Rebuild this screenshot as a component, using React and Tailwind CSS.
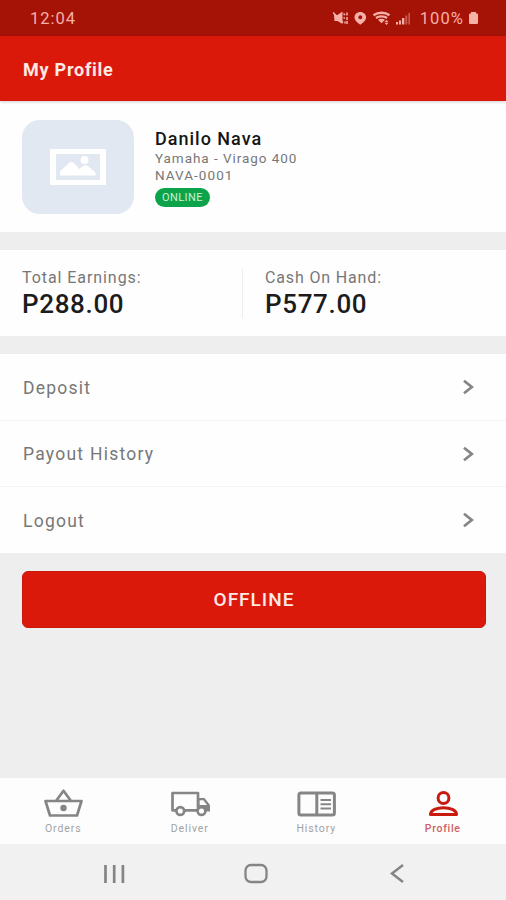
import React from "react";

function StatusIcons() {
  return (
    <svg width="81" height="16" viewBox="0 0 81 16" fill="#f5b0a7" className="block">
      {/* muted speaker */}
      <path d="M1 5h3.500L9.500 1.500v12.500L4.500 11H1.500z" />
      <path d="M0 2.500l10 10" stroke="#f5b0a7" strokeWidth="1.600" />
      <path d="M10.500 3.500l1.500 1.500M10.500 8h1.500M12 11.500v2M14 2.500v3M14 7v3M14 11v3" stroke="#f5b0a7" strokeWidth="1.500" fill="none" />
      {/* location pin */}
      <path fillRule="evenodd" d="M27.300 2c-3.300 0-5.800 2.300-5.800 5.300 0 3.300 3.300 5.800 5.800 7.500 2.500-1.700 5.800-4.200 5.800-7.500 0-3-2.500-5.300-5.800-5.300zm0 3.200a2 2 0 1 1 0 4 2 2 0 0 1 0-4z" />
      {/* wifi */}
      <path d="M40.500 5.200c4.500-3.300 11.500-3.300 16 0M43 8c3-2.300 8-2.300 11 0" stroke="#f5b0a7" strokeWidth="2.300" fill="none" />
      <path d="M45 9.800c2-1.500 5-1.500 7 0l-3.500 3.400zM53.500 10l2 2h-4zM53.500 15l2-2.200h-4z" />
      {/* signal */}
      <path d="M63 12h2v2.500h-2zM66 10.500h2v4h-2zM69 8h2.300v6.500H69z" />
      <path d="M72.300 5.500h2v9h-2zM75.300 3h1.700v11.500h-1.700z" opacity=".45" />
    </svg>
  );
}

function Picture() {
  return (
    <svg width="56" height="36" viewBox="0 0 56 36" className="block">
      <path fill="#fff" fillRule="evenodd" d="M0 0h56v36H0zM6 5v26h44V5z" />
      <path fill="#fff" d="M10 26.500v-4l9-8.500q2.500-1.800 5 0l5.500 6 4-3.200q2-1.300 4 0l8 6.700v3zM30.500 11a4 4 0 1 0 8 0 4 4 0 0 0-8 0z" />
    </svg>
  );
}

function Basket() {
  return (
    <svg width="40" height="28" viewBox="0 0 40 28" fill="none" stroke="#858585" strokeWidth="2.700" strokeLinejoin="round" className="block">
      <path d="M2.500 12h36L34 26.500H7zM13 12l7.500-10.200L28 12" />
      <circle cx="20.500" cy="19" r="3.200" fill="#858585" stroke="none" />
    </svg>
  );
}

function Truck() {
  return (
    <svg width="40" height="28" viewBox="0 0 40 28" fill="none" stroke="#858585" strokeWidth="2.700" strokeLinejoin="round" className="block">
      <path d="M6 21.300H2.500V4h25.500v17.300H14.500" />
      <path fill="#858585" fillRule="evenodd" stroke="none" d="M27 9h7.500l5.500 7v6.500H27zM29.500 11.200V16h7.500l-3.700-4.800z" />
      <circle cx="10.300" cy="22" r="3.900" fill="#fdfdfd" />
      <circle cx="31.500" cy="22" r="3.900" fill="#fdfdfd" />
    </svg>
  );
}

function Book() {
  return (
    <svg width="40" height="28" viewBox="0 0 40 28" fill="none" stroke="#858585" className="block">
      <rect x="2.900" y="4" width="35.500" height="22" rx="2" strokeWidth="3" />
      <path d="M20.800 4v22" strokeWidth="3" />
      <path d="M24.500 11h10.500M24.500 15.200h10.500M24.500 19.400h10.500" strokeWidth="2" />
    </svg>
  );
}

function Person() {
  return (
    <svg width="40" height="28" viewBox="0 0 40 28" fill="none" stroke="#c91a10" strokeWidth="3" strokeLinejoin="round" className="block">
      <circle cx="20.500" cy="9" r="5.400" />
      <path d="M7.500 25.500c0-9 26-9 26 0z" />
    </svg>
  );
}

function Chevron() {
  return (
    <svg width="12" height="16" viewBox="0 0 12 16" fill="none" stroke="#858585" strokeWidth="2.700" className="block">
      <path d="M1 1.800L8.800 8 1 14.200" />
    </svg>
  );
}

function Row({ children }) {
  return (
    <div className="flex flex-1 items-center justify-between pl-[23px] pr-[31px] text-[17.5px] text-[#777]">
      <span className="pt-[2px] tracking-[1.25px]">{children}</span>
      <Chevron />
    </div>
  );
}

function Tab({ icon, children }) {
  return (
    <div className="flex flex-1 flex-col items-center pt-[11px] text-[10.5px] leading-[14px] text-[#a2a2a2]">
      {icon}
      <div className="pt-[5px]">{children}</div>
    </div>
  );
}

export default function App() {
  return (
    <div className="flex h-[900px] w-[506px] flex-col overflow-hidden whitespace-nowrap bg-[#eee] font-['Roboto',sans-serif]">
      <div className="flex h-9 items-center bg-[#a51206] pl-[30px] pr-[27px] text-[16.5px] text-[#f5b0a7]">
        <span className="pt-[2px] tracking-[1px]">12:04</span>
        <div className="ml-auto flex items-center">
          <StatusIcons />
          <span className="ml-[6px] pt-[2px] tracking-[1.1px]">100%</span>
          <svg width="11" height="14" viewBox="0 0 11 14" fill="#f5b0a7" className="ml-1">
            <path d="M3 1h5v1.500h1q1 0 1 1V12q0 1-1 1H2q-1 0-1-1V3.500q0-1 1-1h1z" />
          </svg>
        </div>
      </div>
      <div className="z-10 flex h-[65px] items-center bg-[#da190b] pl-[23px] text-[18px] font-bold text-[#ffe9e5] shadow-[0_1px_3px_rgba(0,0,0,0.2)]">
        <span className="pt-px tracking-[0.75px]">My Profile</span>
      </div>

      <div className="flex h-[131px] bg-[#fefefe] pl-[22px] pt-[19px]">
        <div className="flex h-[94px] w-[112px] items-center justify-center rounded-[18px] bg-[#e1e8f1]">
          <Picture />
        </div>
        <div className="flex flex-col items-start pl-[21px] pt-2">
          <div className="text-[18px] font-medium leading-[22px] tracking-[1px] text-[#151515]">Danilo Nava</div>
          <div className="text-[13.5px] leading-[17px] tracking-[0.95px] text-[#777]">Yamaha - Virago 400</div>
          <div className="text-[13.5px] leading-4 tracking-[1.05px] text-[#777]">NAVA-0001</div>
          <div className="mt-[5px] flex h-[19px] w-[55px] items-center justify-center rounded-full bg-[#0da34a] text-[11px] text-[#c9f2d6]">
            <span className="pt-[2px] tracking-[0.4px]">ONLINE</span>
          </div>
        </div>
      </div>

      <div className="mt-[18px] flex h-[86px] bg-[#fefefe] pt-[18px]">
        <div className="h-[50px] w-[243px] border-r border-[#ededed] pl-[22px]">
          <div className="text-base leading-5 tracking-[0.93px] text-[#777]">Total Earnings:</div>
          <div className="pt-px text-[26px] font-medium leading-[31px] tracking-[0.65px] text-[#1c1c1c]">P288.00</div>
        </div>
        <div className="pl-[22px]">
          <div className="text-base leading-5 tracking-[0.85px] text-[#777]">Cash On Hand:</div>
          <div className="pt-px text-[26px] font-medium leading-[31px] tracking-[0.65px] text-[#1c1c1c]">P577.00</div>
        </div>
      </div>

      <div className="mt-[18px] flex h-[199px] flex-col divide-y divide-[#f3f3f3] bg-[#fefefe]">
        <Row>Deposit</Row>
        <Row>Payout History</Row>
        <Row>Logout</Row>
      </div>

      <div className="ml-[22px] mr-5 mt-[18px] flex h-[57px] items-center justify-center rounded-md border border-[#c9170b] bg-[#da190b] text-[19px] font-medium text-[#ffe9e5]">
        <span className="pt-[2px] tracking-[1px]">OFFLINE</span>
      </div>

      <div className="mt-auto flex h-[66px] bg-[#fdfdfd]">
        <Tab icon={<Basket />}><span className="tracking-[0.9px]">Orders</span></Tab>
        <Tab icon={<Truck />}><span className="tracking-[0.9px]">Deliver</span></Tab>
        <Tab icon={<Book />}><span className="tracking-[0.9px]">History</span></Tab>
        <Tab icon={<Person />}><span className="font-medium tracking-[0.7px] text-[#cf6060]">Profile</span></Tab>
      </div>
      <div className="flex h-14 items-center bg-[#f1f1f1] pl-[103px] pt-[3px]">
        <svg width="302" height="22" viewBox="0 0 302 22" fill="none" stroke="#858585" strokeWidth="2.500" className="block">
          <path d="M2.500 2v18M11.200 2v18M19.900 2v18" strokeWidth="2.700" />
          <rect x="142.500" y="2" width="21" height="17" rx="5.500" strokeWidth="2.300" />
          <path d="M300 2L289 10.500 300 19" />
        </svg>
      </div>
    </div>
  );
}
